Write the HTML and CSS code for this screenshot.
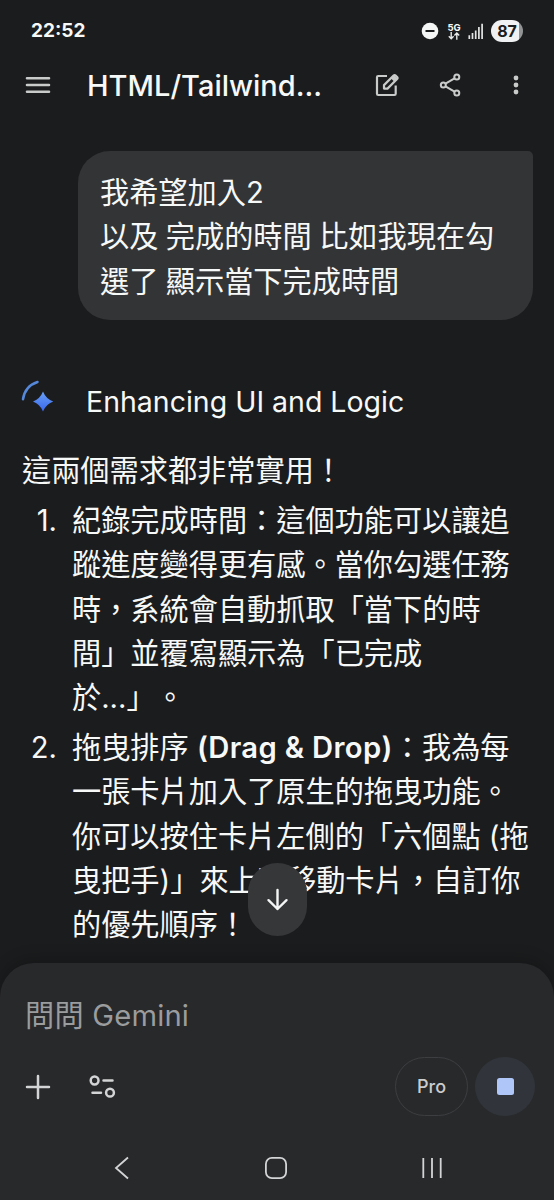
FILE: index.html
```html
<!DOCTYPE html>
<html lang="zh-Hant">
<head>
    <meta charset="UTF-8">
    <meta name="viewport" content="width=device-width, initial-scale=1.0">
    <title>Gemini</title>
    <link rel="stylesheet" href="styles.css">
</head>
<body>
    <div class="statusbar">
        <span class="time">22:52</span>
        <div class="status-icons">
            <svg class="dnd" width="18" height="18" viewBox="0 0 18 18"><circle cx="9" cy="9" r="8.3" fill="#f5f6f6"/><path d="M4.5 9h9" stroke="#1b1c1d" stroke-width="2"/></svg>
            <div class="network">
                <span>5G</span>
                <svg width="12" height="8" viewBox="0 0 12 8" fill="none" stroke="#e8e9e9" stroke-width="1.4"><path d="M3.2 0v6.6M.8 4.3l2.4 2.5 2.4-2.5M8.8 7.8V1.2M6.4 3.6l2.4-2.5 2.4 2.5"/></svg>
            </div>
            <svg class="signal" width="16" height="16" viewBox="0 0 16 16" stroke="#e3e4e4" stroke-width="1.7"><path d="M1.3 12.3V16M4.5 10V16M7.7 7.4V16M10.9 4V16M14.1 .8V16"/></svg>
            <div class="battery">87</div>
        </div>
    </div>

    <header class="topbar">
        <svg class="menu" width="26" height="22" viewBox="0 0 26 22" stroke="#c9caca" stroke-width="2.6" stroke-linecap="round"><path d="M2 4.2h22M2 11h22M2 17.8h22"/></svg>
        <h1>HTML/Tailwind...</h1>
        <svg class="edit" width="26" height="26" viewBox="0 0 26 26" fill="none" stroke="#c9caca" stroke-width="2.200" stroke-linejoin="round"><path d="M13 4H4.200Q3 4 3 5.200V21.800q0 1.200 1.200 1.200H20.500q1.200 0 1.200-1.200V13.500"/><path d="M10 16.600v-3.500L19.600 3.500q1-1 2 0l1.500 1.500q1 1 0 2L13.500 16.600z"/><path d="M16.800 6.300l3.500 3.500 3.300-3.300-3.500-3.500z" fill="#c9caca" stroke="none"/></svg>
        <svg class="share" width="24" height="26" viewBox="0 0 24 26" fill="none" stroke="#c9caca" stroke-width="2"><circle cx="5.300" cy="13" r="2.500"/><circle cx="18.800" cy="5" r="2.500"/><circle cx="18.800" cy="21" r="2.500"/><path d="M7.500 11.700l9-5.300M7.500 14.300l9 5.300"/></svg>
        <svg class="more" width="8" height="22" viewBox="0 0 8 22" fill="#c9caca"><circle cx="4" cy="4" r="2.400"/><circle cx="4" cy="11" r="2.400"/><circle cx="4" cy="18" r="2.400"/></svg>
    </header>

    <main class="chat">
        <div class="bubble">我希望加入2<br>以及 完成的時間 比如我現在勾<br>選了 顯示當下完成時間</div>

        <div class="thinking">
            <svg width="36" height="36" viewBox="0 0 36 36">
                <defs>
                    <linearGradient id="spark" x1="0" y1="0" x2="0" y2="1"><stop offset="0" stop-color="#69a0f5"/><stop offset="1" stop-color="#3966ed"/></linearGradient>
                </defs>
                <path d="M2 19.300Q4 6 16.500 2" fill="none" stroke="#5688da" stroke-width="2.500" stroke-linecap="round"/>
                <path d="M22 11.500q2.800 7.200 10.200 10-7.400 2.800-10.200 10-2.800-7.200-10-10 7.200-2.800 10-10z" fill="url(#spark)"/>
            </svg>
            <h2>Enhancing UI and Logic</h2>
        </div>

        <p class="intro">這兩個需求都非常實用！</p>
        <ol class="answer">
            <li>
                <span class="num">1.</span>
                <div>紀錄完成時間：這個功能可以讓追<br>蹤進度變得更有感。當你勾選任務<br>時，系統會自動抓取「當下的時<br>間」並覆寫顯示為「已完成<br>於...」。</div>
            </li>
            <li>
                <span class="num">2.</span>
                <div>拖曳排序 <b>(Drag &amp; Drop)</b>：我為每<br>一張卡片加入了原生的拖曳功能。<br>你可以按住卡片左側的「六個點 (拖<br>曳把手)」來上下移動卡片，自訂你<br>的優先順序！</div>
            </li>
        </ol>
        <button class="scroll-down" aria-label="向下捲動">
            <svg width="24" height="24" viewBox="0 0 24 24" fill="none" stroke="#f4f5f5" stroke-width="2.400" stroke-linecap="round" stroke-linejoin="round"><path d="M11.500 2v19M2.500 12.200l9 8.800 9-8.800"/></svg>
        </button>
    </main>

    <footer class="composer">
        <div class="prompt">問問 Gemini</div>
        <div class="tools">
            <svg width="26" height="26" viewBox="0 0 26 26" stroke="#d3d4d5" stroke-width="2.500" stroke-linecap="round"><path d="M13 2v22M2 13h22"/></svg>
            <svg class="tune" width="28" height="26" viewBox="0 0 28 26" fill="none" stroke="#d3d4d5" stroke-width="2.500" stroke-linecap="round"><circle cx="6.600" cy="6.500" r="3.900"/><path d="M15.500 6.500h9M4.500 18.700h8.500"/><circle cx="22" cy="18.700" r="3.900"/></svg>
            <button class="model">Pro</button>
            <button class="stop" aria-label="停止"><span></span></button>
        </div>
        <nav class="navbar">
            <svg width="16" height="24" viewBox="0 0 16 24" fill="none" stroke="#d3d4d5" stroke-width="1.800"><path d="M14 1.500L2 12l12 10.500"/></svg>
            <svg width="24" height="24" viewBox="0 0 24 24" fill="none" stroke="#d3d4d5" stroke-width="1.800"><rect x="1.900" y="1.900" width="20.200" height="20.200" rx="6"/></svg>
            <svg width="22" height="24" viewBox="0 0 22 24" stroke="#d3d4d5" stroke-width="1.800"><path d="M2.300 2v20M11 2v20M19.700 2v20"/></svg>
        </nav>
    </footer>
</body>
</html>
```
FILE: styles.css
```css
* {
    box-sizing: border-box;
}
body {
    margin: 0;
    height: 1200px;
    display: flex;
    flex-direction: column;
    overflow: hidden;
    background-color: #1b1c1d;
    color: #f7f8f8;
    font-family: Inter, "Noto Sans CJK TC", sans-serif;
    font-size: 29.2px;
    line-height: 44.4px;
    text-spacing-trim: space-all;
}
h1, h2, p, ol {
    margin: 0;
    padding: 0;
    font-weight: 400;
}
button {
    padding: 0;
    border: none;
    font-family: inherit;
    display: flex;
    align-items: center;
    justify-content: center;
}
svg {
    flex-shrink: 0;
}
.statusbar {
    height: 60px;
    padding: 2px 31px 0;
    display: flex;
    align-items: center;
    justify-content: space-between;
}
.time {
    font-size: 19px;
    font-weight: 700;
}
.status-icons {
    display: flex;
    align-items: center;
}
.network {
    width: 14px;
    margin-left: 8px;
    display: flex;
    flex-direction: column;
    align-items: center;
    font-size: 9.5px;
    font-weight: 700;
    line-height: 9px;
}
.signal {
    margin-left: 7px;
}
.battery {
    width: 32px;
    height: 22px;
    margin: 0 0 0 7px;
    border-radius: 11px;
    background: linear-gradient(90deg, #f0f1f2 86%, #929394 86%);
    color: #1b1c1d;
    font-size: 16px;
    font-weight: 700;
    line-height: 22px;
    text-align: center;
}
.topbar {
    height: 50px;
    padding-left: 25px;
    display: flex;
    align-items: center;
}
.topbar h1 {
    width: 248px;
    margin-left: 36px;
    padding-top: 2px;
    font-size: 29px;
    font-weight: 500;
    white-space: nowrap;
}
.edit {
    margin-left: 39px;
}
.share {
    margin-left: 38px;
}
.more {
    margin-left: 50px;
}
.chat {
    position: relative;
    height: 853px;
    padding: 41px 22px 0;
}
.bubble {
    width: 455px;
    height: 169px;
    margin-left: 56px;
    padding: 20px 22px;
    border-radius: 32px 5px 32px 32px;
    background-color: #333436;
    word-spacing: -0.8px;
}
.thinking {
    margin-top: 60px;
    display: flex;
    align-items: center;
}
.thinking svg {
    margin: -8px 0 0 -1px;
}
.thinking h2 {
    margin-left: 29px;
    font-size: 28.5px;
    white-space: nowrap;
}
.intro {
    margin-top: 25px;
}
.answer {
    list-style: none;
}
.answer li {
    margin-top: 5px;
    display: flex;
    white-space: nowrap;
}
.num {
    width: 35px;
    margin-right: 15px;
    text-align: right;
}
.answer b {
    font-weight: 600;
    letter-spacing: 0.35px;
}
.scroll-down {
    position: absolute;
    left: 248px;
    top: 753px;
    width: 59px;
    height: 73px;
    border-radius: 30px;
    background-color: #363739;
}
.composer {
    height: 237px;
    border-radius: 34px 34px 0 0;
    background-color: #28292b;
    box-shadow: 0 -4px 16px rgba(0, 0, 0, 0.2);
}
.prompt {
    padding: 31px 25px 0;
    color: #9b9c9e;
    letter-spacing: 0.2px;
}
.tools {
    height: 60px;
    margin-top: 18px;
    padding: 1px 19px 0 25px;
    display: flex;
    align-items: center;
}
.tune {
    margin-left: 37px;
}
.model {
    width: 73px;
    height: 59px;
    margin-left: auto;
    border: 1px solid #3c3e41;
    border-radius: 30px;
    background: none;
    color: #cbcccd;
    font-size: 18px;
    font-weight: 500;
}
.stop {
    width: 60px;
    height: 59px;
    margin-left: 7px;
    border-radius: 50%;
    background-color: #31353b;
}
.stop span {
    width: 17px;
    height: 17px;
    border-radius: 2.5px;
    background-color: #afc7f8;
}
.navbar {
    margin-top: 40px;
    padding: 0 111px 0 114px;
    display: flex;
    justify-content: space-between;
}
```
